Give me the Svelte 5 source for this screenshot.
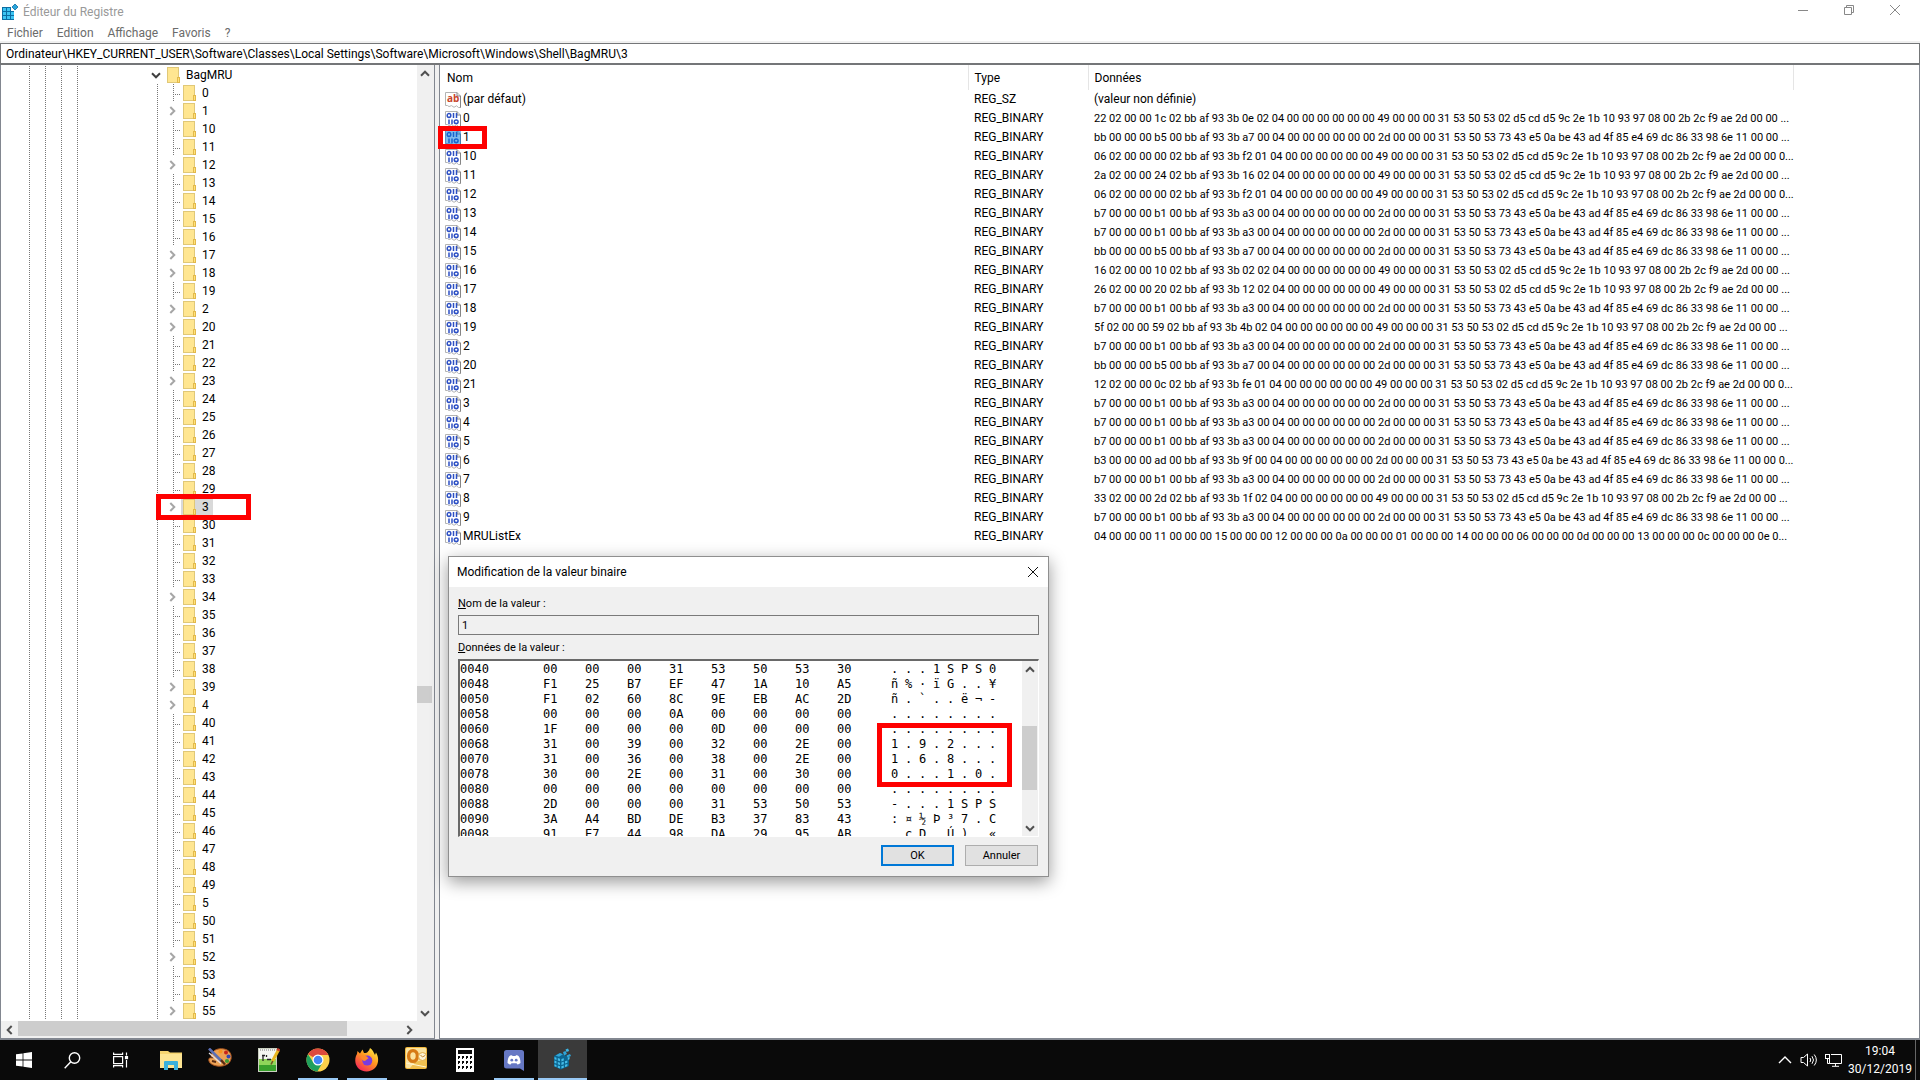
<script>
  const menus = ['Fichier', 'Edition', 'Affichage', 'Favoris', '?'];
  const path = 'Ordinateur\\HKEY_CURRENT_USER\\Software\\Classes\\Local Settings\\Software\\Microsoft\\Windows\\Shell\\BagMRU\\3';

  const expandable = new Set(['1', '12', '17', '18', '2', '20', '23', '3', '34', '39', '4', '52', '55']);
  const keys = Array.from({ length: 56 }, (_, i) => String(i)).sort();
  const treeKeys = keys.filter((k) => !['6', '7', '8', '9'].includes(k));
  const guides = [true, true, true, true, false, false, false, false];

  const tailA = '31 53 50 53 02 d5 cd d5 9c 2e 1b 10 93 97 08 00 2b 2c f9 ae 2d 00 00 ';
  const tailB = '31 53 50 53 73 43 e5 0a be 43 ad 4f 85 e4 69 dc 86 33 98 6e 11 00 00 ';
  const a = (head, end = '...') => `${head} 04 00 00 00 00 00 00 49 00 00 00 ${tailA}${end}`;
  const b = (head, end = '...') => `${head} 00 04 00 00 00 00 00 00 2d 00 00 00 ${tailB}${end}`;
  const b7 = b('b7 00 00 00 b1 00 bb af 93 3b a3');
  const bb = b('bb 00 00 00 b5 00 bb af 93 3b a7');
  const a06 = a('06 02 00 00 00 02 bb af 93 3b f2 01', '0...');
  const values = [
    ['0', a('22 02 00 00 1c 02 bb af 93 3b 0e 02')],
    ['1', bb],
    ['10', a06],
    ['11', a('2a 02 00 00 24 02 bb af 93 3b 16 02')],
    ['12', a06],
    ['13', b7],
    ['14', b7],
    ['15', bb],
    ['16', a('16 02 00 00 10 02 bb af 93 3b 02 02')],
    ['17', a('26 02 00 00 20 02 bb af 93 3b 12 02')],
    ['18', b7],
    ['19', a('5f 02 00 00 59 02 bb af 93 3b 4b 02')],
    ['2', b7],
    ['20', bb],
    ['21', a('12 02 00 00 0c 02 bb af 93 3b fe 01', '0...')],
    ['3', b7],
    ['4', b7],
    ['5', b7],
    ['6', b('b3 00 00 00 ad 00 bb af 93 3b 9f', '0...')],
    ['7', b7],
    ['8', a('33 02 00 00 2d 02 bb af 93 3b 1f 02')],
    ['9', b7],
    ['MRUListEx', '04 00 00 00 11 00 00 00 15 00 00 00 12 00 00 00 0a 00 00 00 01 00 00 00 14 00 00 00 06 00 00 00 0d 00 00 00 13 00 00 00 0c 00 00 00 0e 0...'],
  ];

  const dump = [
    ['0040', '00 00 00 31 53 50 53 30', '...1SPS0'],
    ['0048', 'F1 25 B7 EF 47 1A 10 A5', 'ñ%·ïG..¥'],
    ['0050', 'F1 02 60 8C 9E EB AC 2D', 'ñ.`..ë¬-'],
    ['0058', '00 00 00 0A 00 00 00 00', '........'],
    ['0060', '1F 00 00 00 0D 00 00 00', '........'],
    ['0068', '31 00 39 00 32 00 2E 00', '1.9.2...'],
    ['0070', '31 00 36 00 38 00 2E 00', '1.6.8...'],
    ['0078', '30 00 2E 00 31 00 30 00', '0...1.0.'],
    ['0080', '00 00 00 00 00 00 00 00', '........'],
    ['0088', '2D 00 00 00 31 53 50 53', '-...1SPS'],
    ['0090', '3A A4 BD DE B3 37 83 43', ':¤½Þ³7.C'],
    ['0098', '91 E7 44 98 DA 29 95 AB', '.çD.Ú).«'],
  ];
</script>

{#snippet chevron(dir)}
  <svg class="chev {dir}" viewBox="0 0 10 10" width="10" height="10" aria-hidden="true">
    <path d="M1 6.7 L5 2.7 L9 6.7" fill="none" stroke="currentColor" stroke-width="2" />
  </svg>
{/snippet}

{#snippet folder()}
  <svg class="folder" viewBox="0 0 13 16" width="13" height="16" aria-hidden="true">
    <rect x="0.5" y="0.5" width="11" height="15" fill="#ffe691" stroke="#e0c878" />
    <rect x="10.5" y="10.5" width="2" height="5" fill="#ffe27a" stroke="#e3b94b" />
  </svg>
{/snippet}

{#snippet page()}
  <path d="M0.5 0.5 H12 L15.5 4 V15.5 H13.5 L11.5 13.8 L9 15.3 L6.5 13.6 L4 14.6 L2.5 13.5 H0.5 Z" fill="#fff" stroke="#b3b3b3" />
  <path d="M12 0.5 V4 H15.5 V15.5" fill="none" stroke="#858585" />
{/snippet}

{#snippet binIcon(selected)}
  <svg class="vicon" viewBox="0 0 16 16" width="16" height="16" aria-hidden="true">
    {@render page()}
    <g fill="none" stroke="#2c4fc4" stroke-width="1.5">
      <ellipse cx="4" cy="4.5" rx="1.8" ry="1.9" />
      <path d="M8.5 2 V7 M11.5 2 V7 M4 8.5 V13.2 M7 8.5 V13.2" />
      <ellipse cx="11.2" cy="10.8" rx="1.9" ry="1.8" />
    </g>
    {#if selected}<rect width="16" height="16" fill="#0078d7" opacity="0.5" />{/if}
  </svg>
{/snippet}

{#snippet regCubes(size)}
  <svg viewBox="0 0 16 16" width={size} height={size} aria-hidden="true">
    <rect x="0" y="3" width="12" height="13" fill="#0b6ea3" />
    <g fill="#3cc4f2">
      <rect x="1" y="4" width="3" height="3" /><rect x="5" y="4" width="3" height="3" />
      <rect x="1" y="8" width="3" height="3" /><rect x="5" y="8" width="3" height="3" /><rect x="9" y="8" width="3" height="3" />
      <rect x="1" y="12" width="3" height="3" /><rect x="5" y="12" width="3" height="3" /><rect x="9" y="12" width="3" height="3" />
    </g>
    <rect x="9" y="3" width="4" height="4" fill="#fff" />
    <path d="M13 0 L16 3 L13 6 L10 3 Z" fill="#2aa5dc" stroke="#0b6ea3" stroke-width="0.8" />
  </svg>
{/snippet}

<div class="desktop">
  <div class="window">
    <header class="titlebar">
      <span class="appicon">{@render regCubes(16)}</span>
      <span class="title">Éditeur du Registre</span>
      <div class="winbtns">
        <button aria-label="Réduire"><svg width="12" height="12" viewBox="0 0 12 12"><path d="M1 6.5 H11" /></svg></button>
        <button aria-label="Restaurer"><svg width="12" height="12" viewBox="0 0 12 12"><path d="M1.5 3.5 H8.5 V10.5 H1.5 Z M3.5 3.5 V1.5 H10.5 V8.5 H8.5" /></svg></button>
        <button aria-label="Fermer"><svg width="12" height="12" viewBox="0 0 12 12"><path d="M1 1 L11 11 M11 1 L1 11" /></svg></button>
      </div>
    </header>
    <nav class="menubar">
      {#each menus as m}<button>{m}</button>{/each}
    </nav>
    <input class="address" aria-label="Adresse" value={path} />

    <main class="panes">
      <section class="treepane" aria-label="Arborescence">
        <div class="tree">
          <div class="trow">
            {#each guides as g}<span class="guide" class:line={g}></span>{/each}
            <button class="exp open" aria-label="Réduire BagMRU">{@render chevron('down')}</button>
            <span class="fold">{@render folder()}</span>
            <span class="label">BagMRU</span>
          </div>
          {#each treeKeys as k}
            <div class="trow">
              {#each guides as g}<span class="guide" class:line={g}></span>{/each}
              <span class="guide line"></span>
              {#if expandable.has(k)}
                <button class="exp" aria-label="Développer {k}">{@render chevron('right')}</button>
              {:else}
                <span class="guide line branch"></span>
              {/if}
              <span class="fold" class:sel={k === '3'}>{@render folder()}</span>
              <span class="label" class:sel={k === '3'}>{k}</span>
              {#if k === '3'}<span class="mark mark-key"></span>{/if}
            </div>
          {/each}
        </div>
        <div class="vscroll">
          <button aria-label="Haut">{@render chevron('up')}</button>
          <div class="track"><div class="thumb"></div></div>
          <button aria-label="Bas">{@render chevron('down')}</button>
        </div>
        <div class="hscroll">
          <button aria-label="Gauche">{@render chevron('left')}</button>
          <div class="track"><div class="thumb"></div></div>
          <button aria-label="Droite">{@render chevron('right')}</button>
        </div>
      </section>

      <section class="listpane" aria-label="Valeurs">
        <table class="values">
          <colgroup><col class="c-name" /><col class="c-type" /><col class="c-data" /><col /></colgroup>
          <thead>
            <tr><th>Nom</th><th>Type</th><th>Données</th><th aria-label="Vide"></th></tr>
          </thead>
          <tbody>
            <tr>
              <td class="name">
                <div>
                  <svg class="vicon" viewBox="0 0 16 16" width="16" height="16" aria-hidden="true">
                    {@render page()}
                    <text x="2" y="10" font-size="10" font-weight="700" font-family="Open Sans, sans-serif" fill="#c8452b">ab</text>
                  </svg>
                  (par défaut)
                </div>
              </td>
              <td>REG_SZ</td>
              <td>(valeur non définie)</td>
              <td></td>
            </tr>
            {#each values as [name, data]}
              <tr>
                <td class="name">
                  <div>
                    {@render binIcon(name === '1')}
                    {name}
                    {#if name === '1'}<span class="mark mark-value"></span>{/if}
                  </div>
                </td>
                <td>REG_BINARY</td>
                <td class="data">{data}</td>
                <td></td>
              </tr>
            {/each}
          </tbody>
        </table>
      </section>
    </main>

    <div class="dialog" role="dialog" aria-labelledby="dlg-title">
      <div class="dlg-head">
        <span id="dlg-title">Modification de la valeur binaire</span>
        <button aria-label="Fermer"><svg width="12" height="12" viewBox="0 0 12 12"><path d="M1 1 L11 11 M11 1 L1 11" /></svg></button>
      </div>
      <div class="dlg-body">
        <label for="vname"><u>N</u>om de la valeur :</label>
        <input id="vname" value="1" readonly />
        <div class="caption" id="vdata-label"><u>D</u>onnées de la valeur :</div>
        <div class="hexbox" role="group" aria-labelledby="vdata-label">
          <div class="hexview">
            <table class="hex">
              <tbody>
                {#each dump as [addr, bytes, chars]}
                  <tr>
                    <td class="addr">{addr}</td>
                    {#each bytes.split(' ') as x}<td class="byte">{x}</td>{/each}
                    <td class="gap"></td>
                    {#each [...chars] as c}<td class="char">{c}</td>{/each}
                  </tr>
                {/each}
              </tbody>
            </table>
            <span class="mark mark-ip"></span>
          </div>
          <div class="vscroll hexscroll">
            <button aria-label="Haut">{@render chevron('up')}</button>
            <div class="track"><div class="thumb"></div></div>
            <button aria-label="Bas">{@render chevron('down')}</button>
          </div>
        </div>
        <div class="actions">
          <button class="ok">OK</button>
          <button>Annuler</button>
        </div>
      </div>
    </div>
  </div>

  <footer class="taskbar">
    <div class="system">
      <button aria-label="Démarrer">
        <svg width="16" height="16" viewBox="0 0 16 16"><path fill="#fff" d="M0 2.3 L6.6 1.4 V7.6 H0 Z M7.4 1.3 L16 0 V7.6 H7.4 Z M0 8.4 H6.6 V14.6 L0 13.7 Z M7.4 8.4 H16 V16 L7.4 14.7 Z" /></svg>
      </button>
      <button aria-label="Rechercher">
        <svg width="17" height="17" viewBox="0 0 17 17" fill="none" stroke="#fff" stroke-width="1.4"><circle cx="10.5" cy="6" r="5.2" /><path d="M6.8 9.8 L0.7 16.2" /></svg>
      </button>
      <button aria-label="Affichage des tâches">
        <svg width="17" height="16" viewBox="0 0 17 16" fill="none" stroke="#fff" stroke-width="1.2"><rect x="1.6" y="4.6" width="9" height="7" /><path d="M1.6 0.5 V2.4 H10.6 V0.5 M1.6 15.5 V13.6 H10.6 V15.5 M14.5 0.5 V3.5 M14.5 8 V15.5" /><rect x="13.5" y="4.6" width="2" height="2" fill="#fff" /></svg>
      </button>
    </div>
    <div class="apps">
      <button aria-label="Explorateur de fichiers">
        <svg width="22" height="20" viewBox="0 0 22 20"><path d="M0 1 H8 L10 2.5 H22 V18 H0 Z" fill="#f6d571" /><path d="M0 4 H22 V18 H0 Z" fill="#fde593" /><path d="M4 20 V12 Q4 11 5 11 H17 Q18 11 18 12 V20 H14 V15 H8 V20 Z" fill="#39b1dd" /></svg>
      </button>
      <button class="high" aria-label="Paint">
        <svg width="24" height="20" viewBox="0 0 24 20"><path d="M3 8 C4 2 10 0 16 1 C22 2 24 7 23 11 C22 16 16 19 9 18 C3 17 0 14 1 10.5 C2 9 6 11 6 9 C6 8 3 10 3 8 Z" fill="#eda355" stroke="#a9541f" /><circle cx="12.5" cy="3.6" r="2" fill="#f9941d" /><circle cx="18" cy="4.6" r="2" fill="#c6251b" /><circle cx="20.5" cy="8.5" r="2" fill="#3048b5" /><circle cx="19" cy="13" r="2.1" fill="#3d9a35" /><path d="M4 13 L8 14" stroke="#5a2b12" stroke-width="2" /><path d="M1 0.5 L13.5 13" stroke="#5b6fb5" stroke-width="2.6" /><path d="M1 5 L13 15.5" stroke="#e5dfe0" stroke-width="1.3" /><path d="M13 12 L17 16.5" stroke="#5a2b12" stroke-width="2.4" /></svg>
      </button>
      <button aria-label="Éditeur de texte">
        <svg width="22" height="24" viewBox="0 0 22 24"><rect x="0.5" y="0.5" width="18" height="23" fill="#f4f6f1" stroke="#c9cfc0" /><path d="M1 11 H18 V23 H1 Z" fill="#8fd65a" /><path d="M1 17 H18 V23 H1 Z" fill="#38a12c" /><path d="M2 2 H17" stroke="#777" stroke-dasharray="1 1" /><path d="M5 7 V13 M4 7.5 H7 M8.5 7 V9 M9 11.5 H13" fill="none" stroke="#222" stroke-width="1.3" /><path d="M20.5 2 L14.5 13" stroke="#e8b620" stroke-width="3" /><path d="M21 0.6 L19.8 2.8" stroke="#c73c2b" stroke-width="3" /><path d="M14.8 13 L13 16.5" stroke="#6d5420" stroke-width="1.6" /></svg>
      </button>
      <button class="run" aria-label="Chrome">
        <svg width="24" height="24" viewBox="0 0 24 24"><circle cx="12" cy="12" r="11.5" fill="#fcd04b" /><path d="M12 12 L2 6.3 A11.5 11.5 0 0 1 22.4 6.9 H12 Z" fill="#dc4a3d" /><path d="M2 6.2 A11.5 11.5 0 0 0 11.4 23.5 L16.6 14.6 L12 12 L7.4 14.6 Z" fill="#1fa05c" /><circle cx="12" cy="12" r="5.5" fill="#fff" /><circle cx="12" cy="12" r="4.3" fill="#4285f4" /></svg>
      </button>
      <button class="run" aria-label="Firefox">
        <svg width="24" height="24" viewBox="0 0 24 24"><defs><linearGradient id="fx" x1="0.9" y1="0" x2="0.2" y2="1"><stop offset="0" stop-color="#fff14a" /><stop offset="0.45" stop-color="#ff9a1f" /><stop offset="1" stop-color="#f5215b" /></linearGradient></defs><path d="M15 0 C18 2 18.5 4 20 7 L21 4.5 C24 9 24 16 20 20 C15 25 7 24 3 20 C-1 15 0 9 2 6 L2.5 3 L5 5.5 L7.5 1.5 L9 5 C11 5 12.5 4.5 13 3.5 Q14.5 2 15 0 Z" fill="url(#fx)" /><circle cx="12.3" cy="12.6" r="5" fill="#7a3be0" /><path d="M6 8 C9 6.5 12 8 13.5 10.5 C11.5 11 11 13 9 13 C7 12 6 10.5 6 8 Z" fill="#ff8a2a" /></svg>
      </button>
      <button class="high" aria-label="Outlook">
        <svg width="22" height="22" viewBox="0 0 22 22"><rect width="22" height="22" rx="2" fill="#f3b93c" /><rect x="1" y="1" width="20" height="20" rx="1" fill="#fbe3a0" /><path d="M10 15 L21 12 V21 H5 Z" fill="#f0c052" /><path d="M1 16 L21 20" stroke="#fff4cf" /><ellipse cx="8" cy="9" rx="4.4" ry="5.4" fill="none" stroke="#d67a16" stroke-width="3.4" /><circle cx="17.5" cy="9.5" r="4" fill="#fdf3d6" stroke="#e2ab45" /><path d="M15.5 8 L17.5 10 L20 8.5" fill="none" stroke="#c9882a" /></svg>
      </button>
      <button aria-label="Calculatrice">
        <svg width="18" height="24" viewBox="0 0 18 24"><rect width="18" height="24" fill="#fff" /><rect x="2" y="2" width="14" height="4" fill="#0a0a0a" /><g fill="#0a0a0a">{#each [8, 13, 18] as y}{#each [2, 6, 10, 14] as x}<path d="M{x} {y} h2 v2 h-1 v1 h-1 z" />{/each}{/each}</g></svg>
      </button>
      <button class="run" aria-label="Discord">
        <svg width="20" height="21" viewBox="0 0 20 21"><path d="M2.5 0 H17.5 Q20 0 20 2.5 V21 L16 18.5 H2.5 Q0 18.5 0 16 V2.5 Q0 0 2.5 0 Z" fill="#6678c4" /><path d="M3.5 13 C3.5 9.5 4.5 7 5.5 6 C7 5.1 8 5.2 8 5.2 L8.5 5.9 H11.5 L12 5.2 C12 5.2 13.5 5.2 14.5 6 C15.5 7 16.5 9.5 16.5 13 C15 14.5 13.5 14.5 13.5 14.5 L12.5 13.2 H7.5 L6.5 14.5 C6.5 14.5 5 14.5 3.5 13 Z" fill="#fff" /><circle cx="7.8" cy="10.2" r="1.4" fill="#6678c4" /><circle cx="12.2" cy="10.2" r="1.4" fill="#6678c4" /></svg>
      </button>
      <button class="run active" aria-label="Éditeur du Registre">
        <svg width="22" height="24" viewBox="0 0 22 24"><path d="M2 8 L8 5 L12 7 L17 9 V18 L9 21.5 L2 18.5 Z" fill="#0b6590" /><g fill="#45bce8"><path d="M2.5 9 L4.5 9.7 V12 L2.5 11.3 Z M5.8 10 L8 10.8 V13.2 L5.8 12.4 Z M2.5 12.6 L4.5 13.3 V15.6 L2.5 14.9 Z M5.8 14 L8 14.8 V17 L5.8 16.2 Z M2.5 16.2 L4.5 16.9 V19 L2.5 18.2 Z M5.8 17.5 L8 18.3 V20.6 L5.8 19.8 Z" /><path d="M9.4 11 L11.8 10.2 V12.6 L9.4 13.4 Z M9.4 14.6 L11.8 13.8 V16.2 L9.4 17 Z M9.4 18.2 L11.8 17.4 V19.8 L9.4 20.6 Z M13 13.2 L15.4 12.4 V14.8 L13 15.6 Z M13 16.8 L15.4 16 V18.2 L13 19 Z M15.8 9.5 L17.6 9 V11.3 L15.8 12 Z" /></g><path d="M3.5 7.4 L8 5 L11 6.2 L7 8.8 Z M11 4 L13.5 3 L15 6 L12 7.4 Z M14.5 7.5 L18 6 L19 8 L15.5 9.5 Z" fill="#2fa5d8" /><path d="M13.5 1.5 L16 0.5 L17.2 3 L14.6 4 Z" fill="#3cb6e4" /></svg>
      </button>
    </div>
    <div class="tray">
      <button aria-label="Icônes cachées"><svg width="14" height="8" viewBox="0 0 14 8" fill="none" stroke="#fff" stroke-width="1.4"><path d="M1 7 L7 1 L13 7" /></svg></button>
      <button aria-label="Volume"><svg width="18" height="14" viewBox="0 0 18 14" fill="none" stroke="#fff"><path d="M1 4.5 H3.5 L7.5 1 V13 L3.5 9.5 H1 Z" /><path d="M10 5 Q11.5 7 10 9 M12 3.2 Q15 7 12 10.8 M14.2 1.5 Q18.5 7 14.2 12.5" /></svg></button>
      <button aria-label="Réseau"><svg width="17" height="14" viewBox="0 0 17 14" fill="none" stroke="#fff"><path d="M6 1.5 H16.5 V10.5 H4.5 V6 M10.5 10.5 V13 M7 13.3 H14" /><rect x="0.5" y="1.5" width="4" height="4" /><path d="M2.5 5.5 V10.5 H4.5" /></svg></button>
      <div class="clock"><time>19:04</time><time>30/12/2019</time></div>
      <button class="peek" aria-label="Afficher le Bureau"></button>
    </div>
  </footer>
</div>

<style>
  :global(body) { margin: 0; }
  .desktop { height: 100vh; display: flex; flex-direction: column; overflow: hidden; font: 12px/16px Roboto, 'Open Sans', sans-serif; color: #000; background: #fff; }
  button { font: inherit; color: inherit; background: none; border: 0; padding: 0; margin: 0; display: flex; align-items: center; justify-content: center; }
  svg { display: block; flex: none; }
  .window { position: relative; flex: 1; min-height: 0; display: flex; flex-direction: column; background: #fff; }

  .titlebar { height: 24px; flex: none; display: flex; align-items: center; padding: 0 2px; color: #999; }
  .appicon { margin-right: 5px; }
  .title { flex: 1; }
  .winbtns { display: flex; align-self: flex-start; }
  .winbtns button { width: 46px; height: 20px; }
  .winbtns svg, .dlg-head svg { fill: none; stroke: #888; }
  .menubar { height: 19px; flex: none; display: flex; gap: 14px; padding-left: 7px; color: #6b6b6b; border-bottom: 2px solid #f0f0f0; box-sizing: border-box; }
  .address { height: 22px; flex: none; box-sizing: border-box; width: 100%; font: inherit; color: #000; border: 1px solid #747678; border-bottom-width: 2px; border-radius: 0; padding: 0 5px; background: #fff; outline: 0; }

  .panes { flex: 1; min-height: 0; display: flex; gap: 4px; background: #f0f0f0; }
  .treepane { width: 435px; flex: none; box-sizing: border-box; border: 1px solid #828790; border-top: 0; display: grid; grid-template-columns: 1fr 17px; grid-template-rows: 1fr 17px; background: #f0f0f0; }
  .tree { background: #fff; padding: 1px 0 0 20px; overflow: hidden; min-height: 0; }
  .trow { position: relative; height: 18px; display: flex; align-items: center; white-space: nowrap; }
  .guide { width: 16px; height: 18px; flex: none; box-sizing: border-box; }
  .line { background: repeating-linear-gradient(#777 0 1px, #fff 1px 2px) 8px 0 / 1px 18px no-repeat; }
  .branch { background: repeating-linear-gradient(#777 0 1px, #fff 1px 2px) 8px 0 / 1px 18px no-repeat, repeating-linear-gradient(90deg, #777 0 1px, #fff 1px 2px) 8px 10px / 8px 1px no-repeat; }
  .exp { width: 16px; height: 18px; flex: none; color: #a6a6a6; box-sizing: border-box; padding-right: 2px; }
  .exp.open { color: #404040; }
  .fold { padding: 1px 2px; }
  .label { padding: 0 4px; line-height: 18px; }
  .sel { background: #d9d9d9; }

  .chev.down { transform: rotate(180deg); }
  .chev.left { transform: rotate(-90deg); }
  .chev.right { transform: rotate(90deg); }
  .vscroll, .hscroll { display: flex; background: #f0f0f0; color: #505050; }
  .vscroll { flex-direction: column; width: 16px; }
  .vscroll button { width: 15px; height: 17px; flex: none; }
  .hscroll button { width: 17px; height: 17px; flex: none; }
  .track { flex: 1; display: flex; }
  .vscroll .track { flex-direction: column; }
  .vscroll .track::before { content: ''; flex: 604 0 0; }
  .vscroll .track::after { content: ''; flex: 301 0 0; }
  .vscroll .thumb { flex: 17 0 0; background: #cdcdcd; margin-right: 1px; }
  .hscroll .thumb { width: 86%; height: 15px; background: #cdcdcd; }

  .listpane { flex: 1; min-width: 0; border: 1px solid #828790; border-top: 0; background: #fff; }
  .values { width: 100%; table-layout: fixed; border-collapse: collapse; }
  .c-name { width: 528px; }
  .c-type { width: 120px; }
  .c-data { width: 705px; }
  .values th { height: 25px; padding: 0 6px; text-align: left; font-weight: 400; border-right: 1px solid #e5e5e5; }
  .values th:last-child { border: 0; }
  .values th:first-child { padding-left: 7px; }
  .values td { padding: 0 6px; height: 19px; line-height: 19px; white-space: nowrap; }
  .values .data { font-size: 11px; }
  .values .name { padding-left: 5px; }
  .name div { position: relative; display: flex; align-items: center; gap: 2px; }

  .mark { position: absolute; box-sizing: border-box; border: 5px solid #fe0000; z-index: 2; }
  .mark-key { left: 135px; top: -4px; width: 95px; height: 26px; }
  .mark-value { left: -7px; top: -2px; width: 49px; height: 23px; }
  .mark-ip { left: 417px; top: 62px; width: 135px; height: 64px; }

  .dialog { position: absolute; left: 448px; top: 556px; width: 601px; box-sizing: border-box; border: 1px solid #8f8f8f; background: #f0f0f0; box-shadow: 0 5px 16px rgba(0, 0, 0, 0.4); z-index: 3; }
  .dlg-head { height: 30px; background: #fff; display: flex; align-items: center; justify-content: space-between; padding: 0 9px 0 8px; }
  .dlg-head svg { stroke: #111; }
  .dlg-body { padding: 8px 9px 10px; display: flex; flex-direction: column; font-size: 11px; }
  .dlg-body label, .caption { height: 18px; line-height: 18px; }
  .dlg-body input { height: 20px; box-sizing: border-box; border: 1px solid #7a7a7a; border-radius: 0; background: #f0f0f0; font: inherit; padding: 0 3px; margin: 2px 0 4px; outline: 0; }
  .hexbox { height: 178px; margin-top: 2px; box-sizing: border-box; display: flex; border: 1px solid #fff; border-top: 2px solid #696969; border-left: 2px solid #696969; background: #fff; }
  .hexview { position: relative; flex: 1; overflow: hidden; padding-top: 1px; }
  .hex { border-collapse: collapse; table-layout: fixed; font: 12px/15px 'DejaVu Sans Mono', 'Liberation Mono', monospace; width: 543px; }
  .hex td { padding: 0; height: 15px; white-space: nowrap; }
  .addr { width: 83px; }
  .byte { width: 42px; }
  .gap { width: 12px; }
  .char { width: 14px; }
  .hexscroll .track::before { flex: 48 0 0; }
  .hexscroll .track::after { flex: 29 0 0; }
  .hexscroll .thumb { flex: 65 0 0; }
  .actions { display: flex; justify-content: flex-end; gap: 11px; margin: 8px 1px 0 0; }
  .actions button { width: 73px; height: 21px; box-sizing: border-box; background: #e1e1e1; border: 1px solid #adadad; }
  .actions .ok { border: 2px solid #0078d7; }

  .taskbar { height: 40px; flex: none; background: #0a0a0a; color: #fff; display: flex; border-top: 1px solid #828790; }
  .system, .apps { display: flex; }
  .system { margin-right: 2px; }
  .system button { width: 48px; }
  .apps button { width: 49px; position: relative; }
  .apps .high { padding-bottom: 4px; }
  .run::after { content: ''; position: absolute; left: 5px; right: 4px; bottom: 0; height: 2px; background: #99c9f5; }
  .active { background: #3a3a3a; }
  .active::after { left: 0; right: 0; }
  .tray { margin-left: auto; display: flex; }
  .tray button { width: 24px; }
  .clock { display: flex; flex-direction: column; justify-content: center; align-items: center; width: 70px; line-height: 18px; }
  .tray .peek { width: 5px; border-left: 1px solid #666; }
</style>
